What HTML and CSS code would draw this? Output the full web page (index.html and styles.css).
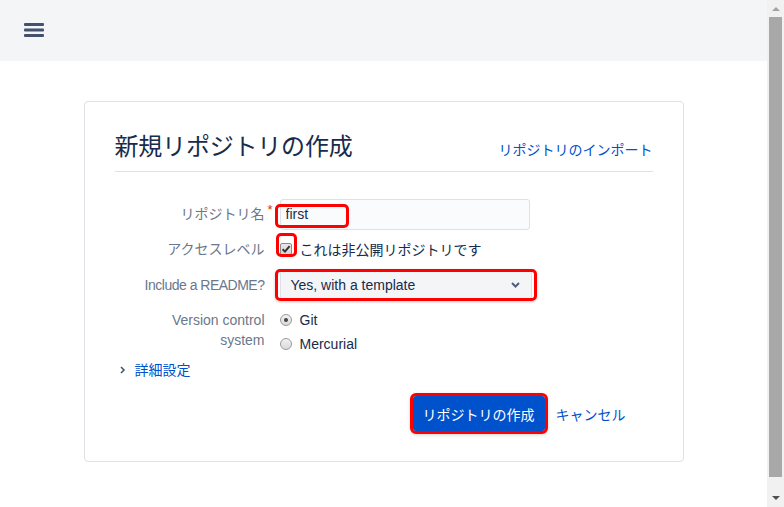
FILE: index.html
```html
<!DOCTYPE html>
<html lang="ja">
<head>
    <meta charset="UTF-8">
    <title>新規リポジトリの作成</title>
    <link rel="stylesheet" href="styles.css">
</head>
<body>
    <div class="window">
        <div class="page">
            <header class="topbar">
                <button class="menu-btn" type="button">
                    <svg width="20" height="14" viewBox="0 0 20 14">
                        <rect x="0" y="0" width="20" height="3" rx="1" fill="#42526e"/>
                        <rect x="0" y="5.5" width="20" height="3" rx="1" fill="#42526e"/>
                        <rect x="0" y="11" width="20" height="3" rx="1" fill="#42526e"/>
                    </svg>
                </button>
            </header>

            <main class="content">
                <section class="card">
                    <div class="card-head">
                        <h1>新規リポジトリの作成</h1>
                        <a class="import-link" href="#">リポジトリのインポート</a>
                    </div>

                    <form class="repo-form">
                        <!-- Repository name -->
                        <div class="field field-name">
                            <label class="field-label">リポジトリ名<span class="req">*</span></label>
                            <div class="control">
                                <input class="text-input" type="text" value="first">
                                <span class="mark mark-name"></span>
                            </div>
                        </div>

                        <!-- Access level -->
                        <div class="field field-access">
                            <label class="field-label">アクセスレベル</label>
                            <div class="control check-line">
                                <span class="checkbox">
                                    <svg width="10" height="10" viewBox="0 0 10 10">
                                        <path d="M1.6 5.2 L4 7.6 L8.6 2.2" fill="none" stroke="#333" stroke-width="2"/>
                                    </svg>
                                </span>
                                <span>これは非公開リポジトリです</span>
                                <span class="mark mark-check"></span>
                            </div>
                        </div>

                        <!-- README -->
                        <div class="field field-readme">
                            <label class="field-label readme-label">Include a README?</label>
                            <div class="control">
                                <div class="select">
                                    <span>Yes, with a template</span>
                                    <svg width="9" height="6" viewBox="0 0 9 6">
                                        <path d="M1 1 L4.5 4.5 L8 1" fill="none" stroke="#505f79" stroke-width="2"/>
                                    </svg>
                                </div>
                                <span class="mark mark-select"></span>
                            </div>
                        </div>

                        <!-- VCS -->
                        <div class="field field-vcs">
                            <label class="field-label vcs-label">Version control system</label>
                            <div class="control radio-group">
                                <div class="radio-line"><span class="radio checked"></span>Git</div>
                                <div class="radio-line"><span class="radio"></span>Mercurial</div>
                            </div>
                        </div>

                        <a class="advanced" href="#">
                            <svg width="6" height="8" viewBox="0 0 6 8">
                                <path d="M1 1 L4 4 L1 7" fill="none" stroke="#42526e" stroke-width="1.5"/>
                            </svg>
                            詳細設定
                        </a>

                        <div class="actions">
                            <button class="btn-primary" type="button">リポジトリの作成</button>
                            <a class="cancel-link" href="#">キャンセル</a>
                        </div>
                    </form>
                </section>
            </main>
        </div>

        <div class="scrollbar">
            <div class="sb-up"><span class="arrow-up"></span></div>
            <div class="sb-thumb"></div>
            <div class="sb-down"><span class="arrow-down"></span></div>
        </div>
    </div>
</body>
</html>
```

FILE: styles.css
```css
body {
    margin: 0;
    font-family: "Liberation Sans", "Noto Sans CJK JP", sans-serif;
    font-size: 14px;
    color: #172b4d;
}
a {
    color: #0052cc;
    text-decoration: none;
}
.window {
    display: flex;
    height: 507px;
    overflow: hidden;
}
.page {
    flex: 1;
    background-color: #fff;
}
.topbar {
    height: 61px;
    background-color: #f4f5f7;
    display: flex;
    align-items: center;
    padding-left: 24px;
}
.menu-btn {
    border: none;
    background: none;
    padding: 0;
    display: flex;
    margin-top: -1px;
}
.content {
    padding-top: 40px;
    display: flex;
    justify-content: center;
}
.card {
    width: 600px;
    box-sizing: border-box;
    border: 1px solid #dfe1e6;
    border-radius: 4px;
    padding: 0 30px 30px;
}
.card-head {
    display: flex;
    justify-content: space-between;
    align-items: center;
    padding: 29px 0 8px;
    border-bottom: 1px solid #dfe1e6;
}
h1 {
    margin: 0;
    font-size: 24px;
    font-weight: normal;
    line-height: 32px;
    letter-spacing: -0.2px;
}
.import-link {
    margin-top: 4px;
}
.repo-form {
    padding-top: 26px;
}
.field {
    display: grid;
    grid-template-columns: 150px 1fr;
    column-gap: 15px;
    align-items: center;
}
.field-label {
    text-align: right;
    color: #6b778c;
    line-height: 20px;
    position: relative;
}
.readme-label {
    letter-spacing: -0.5px;
}
.req {
    position: absolute;
    right: -8px;
    top: -4px;
    color: #de350b;
    font-size: 13px;
}
.control {
    position: relative;
    justify-self: start;
}
.field-name {
    min-height: 32px;
}
.text-input {
    display: block;
    width: 250px;
    height: 31px;
    box-sizing: border-box;
    border: 1px solid #dfe1e6;
    border-radius: 3px;
    background-color: #fafbfc;
    padding: 0 5px;
    font: inherit;
    color: #172b4d;
}
.field-access {
    margin-top: 7px;
    height: 24px;
}
.check-line {
    display: flex;
    align-items: center;
    gap: 8px;
}
.checkbox {
    width: 12px;
    height: 12px;
    box-sizing: border-box;
    border: 1px solid #8a8a8a;
    border-radius: 2px;
    background: linear-gradient(#e8e8e8, #d4d4d4);
    display: flex;
    align-items: center;
    justify-content: center;
}
.field-readme {
    margin-top: 8px;
}
.select {
    width: 252px;
    height: 31px;
    box-sizing: border-box;
    border: 1px solid #dfe1e6;
    border-radius: 3px;
    background-color: #f4f5f7;
    display: flex;
    align-items: center;
    justify-content: space-between;
    padding: 0 11px 0 10px;
}
.field-vcs {
    margin-top: 8px;
    align-items: start;
}
.vcs-label {
    padding: 2px 0 0 40px;
}
.radio-line {
    display: flex;
    align-items: center;
    gap: 8px;
    height: 24px;
}
.radio {
    width: 12px;
    height: 12px;
    box-sizing: border-box;
    border: 1px solid #9a9a9a;
    border-radius: 50%;
    background: linear-gradient(#f2f2f2, #dadada);
    display: flex;
    align-items: center;
    justify-content: center;
}
.radio.checked::after {
    content: "";
    width: 4px;
    height: 4px;
    border-radius: 50%;
    background-color: #444;
}
.advanced {
    display: flex;
    align-items: center;
    gap: 9px;
    margin-top: 4px;
    padding-left: 5px;
    line-height: 20px;
}
.actions {
    display: flex;
    align-items: center;
    justify-content: flex-end;
    margin-top: 16px;
    padding-right: 27px;
}
.btn-primary {
    height: 35px;
    padding: 0 10px;
    border: none;
    border-radius: 3px;
    background-color: #0052cc;
    color: #fff;
    font: inherit;
    outline: 3px solid #f00;
    outline-offset: 0;
    box-shadow: 0 1px 4px 2px rgba(0, 0, 0, 0.25);
}
.cancel-link {
    margin-left: 11px;
}

/* red annotation boxes */
.mark {
    position: absolute;
    box-sizing: border-box;
    border: 3px solid #f00;
    border-radius: 5px;
    pointer-events: none;
}
.mark-name {
    left: -5px;
    top: 5px;
    width: 74px;
    height: 24px;
}
.mark-check {
    left: -4px;
    top: -6px;
    width: 21px;
    height: 24px;
}
.mark-select {
    left: -5px;
    top: 0;
    right: -5px;
    bottom: -1px;
    box-shadow: 0 1px 3px rgba(0, 0, 0, 0.2);
}

/* scrollbar */
.scrollbar {
    width: 17px;
    background-color: #f1f1f1;
    display: flex;
    flex-direction: column;
}
.sb-up {
    height: 17px;
    display: flex;
    justify-content: center;
    padding-top: 7px;
    box-sizing: border-box;
}
.arrow-up {
    width: 0;
    height: 0;
    border-left: 4px solid transparent;
    border-right: 4px solid transparent;
    border-bottom: 4px solid #a3a3a3;
}
.sb-thumb {
    height: 460px;
    margin: 0 2px;
    background-color: #a8a8a8;
}
.sb-down {
    flex: 1;
    display: flex;
    justify-content: center;
    padding-top: 19px;
}
.arrow-down {
    width: 0;
    height: 0;
    border-left: 4px solid transparent;
    border-right: 4px solid transparent;
    border-top: 4px solid #505050;
}
```
